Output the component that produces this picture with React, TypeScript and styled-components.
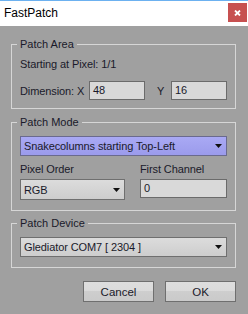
import React from 'react';
import styled, { createGlobalStyle } from 'styled-components';

const GlobalStyle = createGlobalStyle`
  html, body {
    margin: 0;
    padding: 0;
    background: #a0a0a0;
  }
  body {
    font-family: "Liberation Sans", Arial, sans-serif;
    font-size: 11px;
    color: #1a1a2a;
  }
`;

const Arrow: React.FC = () => (
  <svg width="7" height="4" viewBox="0 0 7 4">
    <path d="M0 0 H7 L3.5 4 Z" fill="#101010" />
  </svg>
);

const CloseIcon: React.FC = () => (
  <svg width="7" height="6" viewBox="0 0 7 6">
    <path d="M1 0.5 L6 5.5 M6 0.5 L1 5.5" stroke="#fff" strokeWidth="1.8" />
  </svg>
);

const Select: React.FC<{ value: string; active?: boolean; height?: number }> = ({
  value,
  active,
  height = 20
}) => (
  <SelectBox $active={active} $height={height}>
    <span>{value}</span>
    <Arrow />
  </SelectBox>
);

const App: React.FC = () => {
  return (
    <Window>
      <GlobalStyle />
      <TitleBar>
        <Title>FastPatch</Title>
        <CloseButton>
          <CloseIcon />
        </CloseButton>
      </TitleBar>
      <Body>
        <Group $pt={6} $pb={8}>
          <Legend>Patch Area</Legend>
          <Text>Starting at Pixel: 1/1</Text>
          <DimRow>
            <Text>Dimension: X</Text>
            <Input>48</Input>
            <YLabel>Y</YLabel>
            <Input>16</Input>
          </DimRow>
        </Group>

        <Group $pt={7} $pb={10} $mt={6}>
          <Legend>Patch Mode</Legend>
          <Select value="Snakecolumns starting Top-Left" active />
          <OrderGrid>
            <Text>Pixel Order</Text>
            <Text>First Channel</Text>
            <Select value="RGB" height={21} />
            <Input>0</Input>
          </OrderGrid>
        </Group>

        <Group $pt={7} $pb={10} $mt={5}>
          <Legend>Patch Device</Legend>
          <Select value="Glediator COM7 [ 2304 ]" />
        </Group>

        <Buttons>
          <Button>Cancel</Button>
          <Button>OK</Button>
        </Buttons>
      </Body>
    </Window>
  );
};

const Window = styled.div`
  width: 248px;
  height: 314px;
  background: #a0a0a0;
  display: flex;
  flex-direction: column;
  overflow: hidden;
`;

const TitleBar = styled.div`
  height: 25px;
  border-top: 1px solid #6cb1f0;
  background: #ffffff;
  display: flex;
  justify-content: space-between;
  align-items: flex-start;
  padding-left: 4px;
`;

const Title = styled.div`
  font-size: 12px;
  line-height: 14px;
  margin-top: 5px;
  color: #000;
`;

const CloseButton = styled.div`
  width: 19px;
  height: 19px;
  margin-top: 2px;
  margin-right: 1px;
  background: #c75050;
  display: flex;
  align-items: center;
  justify-content: center;
`;

const Body = styled.div`
  padding: 11px 12px 0 11px;
  display: flex;
  flex-direction: column;
`;

const Group = styled.fieldset<{ $pt: number; $pb: number; $mt?: number }>`
  margin: ${p => p.$mt || 0}px 0 0 0;
  min-inline-size: 0;
  border: 1px solid #d6d6d6;
  padding: ${p => p.$pt}px 8px ${p => p.$pb}px 8px;
  display: flex;
  flex-direction: column;
`;

const Legend = styled.legend`
  padding: 0 3px;
  margin-left: -3px;
  font-size: 11px;
  line-height: 14px;
`;

const Text = styled.div`
  line-height: 14px;
  white-space: nowrap;
  letter-spacing: -0.1px;
`;

const DimRow = styled.div`
  margin-top: 10px;
  display: grid;
  grid-template-columns: 69px 56px 26px 56px;
  align-items: center;
`;

const YLabel = styled(Text)`
  padding-left: 12px;
`;

const Input = styled.div`
  box-sizing: border-box;
  height: 19px;
  background: #d9d9d9;
  border: 1px solid #6b6b6b;
  padding-left: 3px;
  line-height: 17px;
`;

const SelectBox = styled.div<{ $active?: boolean; $height: number }>`
  box-sizing: border-box;
  height: ${p => p.$height}px;
  border: 1px solid ${p => (p.$active ? '#6a6a8e' : '#6f6f6f')};
  background: ${p =>
    p.$active
      ? 'linear-gradient(#a9a9f4, #9b9bec)'
      : 'linear-gradient(#dcdcdc, #cdcdcd)'};
  display: flex;
  align-items: center;
  justify-content: space-between;
  padding: 0 4px 0 3px;
  white-space: nowrap;
  letter-spacing: -0.1px;
`;

const OrderGrid = styled.div`
  margin-top: 6px;
  display: grid;
  grid-template-columns: 105px 87px;
  column-gap: 15px;
  row-gap: 3px;
  align-items: start;
`;

const Buttons = styled.div`
  margin-top: 13px;
  display: flex;
  justify-content: flex-end;
  gap: 11px;
`;

const Button = styled.div`
  box-sizing: border-box;
  width: 71px;
  height: 21px;
  border: 1px solid #6f6f6f;
  background: linear-gradient(#dedede 0%, #dadada 50%, #cecece 50%, #cacaca 100%);
  display: flex;
  align-items: center;
  justify-content: center;
  font-size: 11.5px;
`;

export default App;
